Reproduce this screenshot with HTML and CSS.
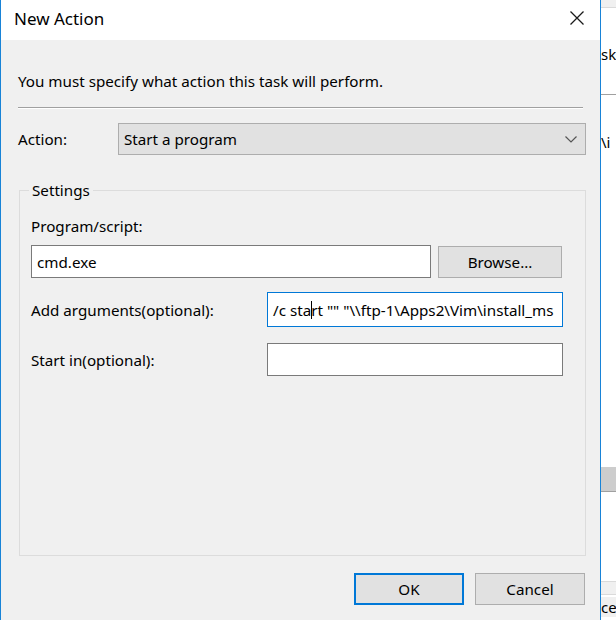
FILE: index.html
```html
<!DOCTYPE html>
<html lang="en">
<head>
    <meta charset="UTF-8">
    <meta name="viewport" content="width=device-width, initial-scale=1.0">
    <title>New Action</title>
    <link rel="stylesheet" href="styles.css">
</head>
<body>
    <div class="screen">
        <div class="dialog">
            <header class="titlebar">
                <span class="title">New Action</span>
                <span class="close">
                    <svg width="16" height="16" viewBox="0 0 16 16">
                        <path d="M1.5 1.5 L14.5 14.5 M14.5 1.5 L1.5 14.5" stroke="#1a1a1a" stroke-width="1.3" fill="none"/>
                    </svg>
                </span>
            </header>

            <main class="content">
                <p class="intro">You must specify what action this task will perform.</p>
                <div class="rule"></div>

                <div class="action-row">
                    <span class="action-label">Action:</span>
                    <div class="select">
                        <span>Start a program</span>
                        <svg class="chevron" width="12" height="7" viewBox="0 0 12 7">
                            <path d="M0.5 0.5 L6 6 L11.5 0.5" stroke="#555" stroke-width="1.2" fill="none"/>
                        </svg>
                    </div>
                </div>

                <fieldset class="settings">
                    <legend>Settings</legend>
                    <div class="field-label">Program/script:</div>
                    <div class="program-row">
                        <div class="input program">cmd.exe</div>
                        <button class="btn browse">Browse...</button>
                    </div>
                    <div class="pair-row">
                        <span class="pair-label">Add arguments(optional):</span>
                        <div class="input focused">/c sta<span class="caret"></span>rt "" "\\ftp-1\Apps2\Vim\install_ms</div>
                    </div>
                    <div class="pair-row">
                        <span class="pair-label">Start in(optional):</span>
                        <div class="input"></div>
                    </div>
                </fieldset>

                <div class="actions">
                    <button class="btn default">OK</button>
                    <button class="btn">Cancel</button>
                </div>
            </main>
        </div>

        <!-- window behind the dialog -->
        <div class="behind">
            <div class="behind-top"></div>
            <div class="behind-text first">sk</div>
            <div class="behind-rule"></div>
            <div class="behind-text second">\i</div>
            <div class="behind-scroll"></div>
            <div class="behind-gap"></div>
            <div class="behind-bar"></div>
            <div class="behind-text last">ce</div>
        </div>
    </div>
</body>
</html>
```

FILE: styles.css
```css
* {
    margin: 0;
    padding: 0;
    box-sizing: border-box;
}

body {
    background: #ffffff;
    color: #000000;
    font-family: 'Noto Sans', 'Open Sans', sans-serif;
    font-size: 15.2px;
    overflow: hidden;
}

.screen {
    display: flex;
    width: 616px;
    height: 620px;
}

/* Dialog */
.dialog {
    width: 601px;
    height: 620px;
    border-left: 1px solid #1883d7;
    border-right: 1px solid #1883d7;
    display: flex;
    flex-direction: column;
}

.titlebar {
    height: 40px;
    background: #ffffff;
    display: flex;
    align-items: center;
    justify-content: space-between;
    padding: 0 13px 4px 13px;
}

.title {
    font-size: 17px;
}

.close {
    display: flex;
    margin-right: 2px;
}

.content {
    flex: 1;
    background: #f0f0f0;
    padding: 31px 14px 0 17px;
    display: flex;
    flex-direction: column;
}

.intro {
    line-height: 21px;
}

.rule {
    margin: 15px 3px 0 0;
    height: 2px;
    border-top: 1px solid #a0a0a0;
    border-bottom: 1px solid #ffffff;
}

.action-row {
    display: flex;
    align-items: center;
    margin-top: 14px;
}

.action-label {
    width: 100px;
}

.select {
    flex: 1;
    height: 32px;
    background: #e1e1e1;
    border: 1px solid #adadad;
    display: flex;
    align-items: center;
    justify-content: space-between;
    padding: 0 8px 0 5px;
}

/* Settings group */
.settings {
    margin: 25px 0 0 1px;
    height: 376px;
    border: 1px solid #dcdcdc;
    padding: 0 22px 0 11px;
}

.settings legend {
    padding: 0 3px;
    margin-left: -2px;
    line-height: 20px;
}

.field-label {
    margin-top: 16px;
    line-height: 20px;
}

.program-row {
    display: flex;
    align-items: center;
    gap: 7px;
    margin-top: 9px;
}

.input {
    height: 33px;
    background: #ffffff;
    border: 1px solid #7a7a7a;
    padding: 0 5px;
    display: flex;
    align-items: center;
    white-space: nowrap;
    overflow: hidden;
}

.input.program {
    width: 400px;
}

.input.focused {
    border-color: #0078d7;
    height: 35px;
}

.caret {
    display: inline-block;
    width: 1px;
    height: 18px;
    background: #000000;
    margin-right: -1px;
}

.btn {
    font: inherit;
    color: #000000;
    background: #e1e1e1;
    border: 1px solid #adadad;
    height: 32px;
}

.btn.browse {
    width: 124px;
}

.pair-row {
    display: grid;
    grid-template-columns: 236px 296px;
    align-items: center;
    margin-top: 14px;
}

.pair-row + .pair-row {
    margin-top: 16px;
}

/* Bottom buttons */
.actions {
    display: flex;
    justify-content: flex-end;
    gap: 11px;
    margin-top: 17px;
    padding-right: 1px;
}

.actions .btn {
    width: 110px;
}

.btn.default {
    border: 2px solid #0078d7;
}

/* Window behind */
.behind {
    flex: 1;
    overflow: hidden;
    background: #ffffff;
    display: flex;
    flex-direction: column;
    font-size: 15px;
}

.behind-top {
    height: 8px;
    background: #f0f0f0;
    border-bottom: 1px solid #dadada;
}

.behind-text {
    white-space: nowrap;
    line-height: 20px;
}

.behind-text.first {
    margin-top: 36px;
}

.behind-rule {
    margin-top: 30px;
    border-top: 1px solid #a0a0a0;
}

.behind-text.second {
    margin-top: 37px;
}

.behind-scroll {
    margin-top: 315px;
    height: 25px;
    background: #cdcdcd;
    border-bottom: 1px solid #a0a0a0;
}

.behind-gap {
    height: 89px;
}

.behind-bar {
    height: 14px;
    background: #f0f0f0;
    border-top: 1px solid #dadada;
    border-bottom: 1px solid #dadada;
}

.behind-text.last {
    background: #f0f0f0;
    margin-top: 2px;
}
```
